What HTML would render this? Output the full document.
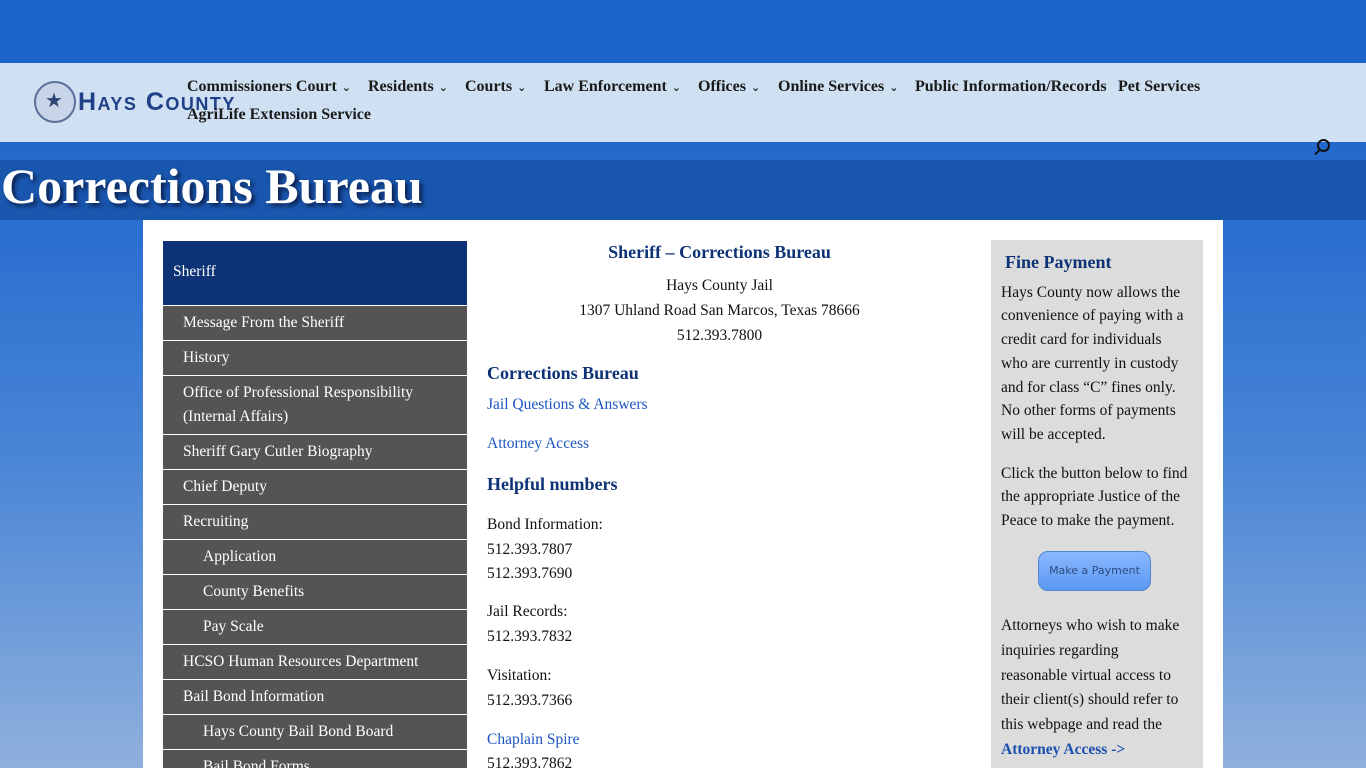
<!DOCTYPE html>
<html style="overflow:hidden;height:768px"><head><style>
*{margin:0;padding:0;box-sizing:border-box}
body{width:1366px;height:768px;overflow:hidden;position:relative;font-family:"Liberation Serif",serif;background:linear-gradient(180deg,#1a5fc4 0%,#2a6ed0 30%,#4a86d6 60%,#8fb0dd 100%)}
.top{position:absolute;top:0;left:0;width:1366px;height:63px;background:#1b63c9}
.hdr{position:absolute;top:63px;left:0;width:1366px;height:79px;background:#cfe0f3}
.logo{position:absolute;left:34px;top:81px;width:42px;height:42px;border-radius:50%;border:2px solid #5a6f99;background:#c8d4e8}
.logo:after{content:"★";position:absolute;left:9px;top:5px;font-size:20px;color:#2d4373}
.lt{position:absolute;left:78px;top:88px;font-family:"Liberation Sans",sans-serif;font-weight:bold;font-size:25px;color:#1f3f87;letter-spacing:1.5px;font-variant:small-caps}
.nav{position:absolute;top:78px;left:187px;font-weight:bold;font-size:16px;color:#1a1a1a}
.nav span{position:absolute;white-space:nowrap}
.nav i{font-style:normal;font-size:11px;font-family:"DejaVu Sans",sans-serif;margin-left:5px}
.srch{position:absolute;left:1317px;top:139px;width:13px;height:13px;border:2px solid #111;border-radius:50%}
.srch:after{content:"";position:absolute;left:-5px;top:10px;width:7px;height:2px;background:#111;transform:rotate(-45deg)}
.band{position:absolute;top:160px;left:0;width:1366px;height:60px;background:rgba(15,70,150,.55)}
.title{position:absolute;left:1px;top:157px;font-size:50px;font-weight:bold;color:#fff;text-shadow:3px 3px 4px #0b2250}
.main{position:absolute;top:220px;left:143px;width:1080px;height:548px;background:#fff}
.side{position:absolute;left:163px;top:241px;width:304px}
.side .h{background:#0d3275;color:#fff;height:64px;padding:22px 10px;font-size:15.5px}
.side div.i{background:#545454;color:#fff;font-size:15.5px;border-top:1px solid #fff;padding:5px 20px;line-height:24px}
.side div.s{padding-left:40px}
.c{position:absolute;left:487px;width:465px;font-size:15.5px;color:#111}
.ce{text-align:center}
h3{color:#0d3275;font-size:18px}
a{color:#1b55c2;text-decoration:none}
.fine{position:absolute;left:991px;top:240px;width:212px;height:528px;background:#dcdcdc;padding:10px 14px 10px 10px;font-size:15.5px;line-height:23.7px;color:#111}
.btn{position:absolute;left:47px;top:311px;width:113px;height:40px;border-radius:10px;background:linear-gradient(#8ab8ff,#5b98f0);border:1px solid #4f86d6;font-family:"DejaVu Sans",sans-serif;font-size:11px;color:#2b4d80;text-align:center;line-height:38px}
</style></head><body>
<div class="top"></div>
<div class="hdr"></div>
<div class="logo"></div>
<div class="lt">Hays County</div>
<div class="nav">
<span style="left:0;top:0">Commissioners Court<i>⌄</i></span>
<span style="left:181px;top:0">Residents<i>⌄</i></span>
<span style="left:278px;top:0">Courts<i>⌄</i></span>
<span style="left:357px;top:0">Law Enforcement<i>⌄</i></span>
<span style="left:511px;top:0">Offices<i>⌄</i></span>
<span style="left:591px;top:0">Online Services<i>⌄</i></span>
<span style="left:728px;top:0">Public Information/Records</span>
<span style="left:931px;top:0">Pet Services</span>
<span style="left:0;top:28px">AgriLife Extension Service</span>
</div>
<div class="srch"></div>
<div class="band"></div>
<div class="title">Corrections Bureau</div>
<div class="main"></div>
<div class="side">
<div class="h">Sheriff</div>
<div class="i">Message From the Sheriff</div>
<div class="i">History</div>
<div class="i">Office of Professional Responsibility (Internal Affairs)</div>
<div class="i">Sheriff Gary Cutler Biography</div>
<div class="i">Chief Deputy</div>
<div class="i">Recruiting</div>
<div class="i s">Application</div>
<div class="i s">County Benefits</div>
<div class="i s">Pay Scale</div>
<div class="i">HCSO Human Resources Department</div>
<div class="i">Bail Bond Information</div>
<div class="i s">Hays County Bail Bond Board</div>
<div class="i s">Bail Bond Forms</div>
</div>
<div class="c ce" style="top:242px"><h3>Sheriff – Corrections Bureau</h3></div>
<div class="c ce" style="top:273px;line-height:25px">Hays County Jail<br>1307 Uhland Road San Marcos, Texas 78666<br>512.393.7800</div>
<div class="c" style="top:363px"><h3>Corrections Bureau</h3></div>
<div class="c" style="top:396px"><a>Jail Questions &amp; Answers</a></div>
<div class="c" style="top:435px"><a>Attorney Access</a></div>
<div class="c" style="top:474px"><h3>Helpful numbers</h3></div>
<div class="c" style="top:513px;line-height:24.5px">Bond Information:<br>512.393.7807<br>512.393.7690</div>
<div class="c" style="top:600px;line-height:24.5px">Jail Records:<br>512.393.7832</div>
<div class="c" style="top:664px;line-height:24.5px">Visitation:<br>512.393.7366</div>
<div class="c" style="top:728px;line-height:24px"><a>Chaplain Spire</a><br>512.393.7862</div>
<div class="fine">
<div style="color:#0d3275;font-weight:bold;font-size:18px;margin:1px 0 6px 4px">Fine Payment</div>
Hays County now allows the convenience of paying with a credit card for individuals who are currently in custody and for class “C” fines only. No other forms of payments will be accepted.
<div style="margin-top:15px">Click the button below to find the appropriate Justice of the Peace to make the payment.</div>
<div class="btn">Make a Payment</div>
<div style="position:absolute;top:374px;left:10px;right:18px;line-height:24.8px">Attorneys who wish to make inquiries regarding reasonable virtual access to their client(s) should refer to this webpage and read the <a style="font-weight:bold;color:#1b4fb0;white-space:nowrap">Attorney Access -&gt;</a></div>
</div>
</body></html>
